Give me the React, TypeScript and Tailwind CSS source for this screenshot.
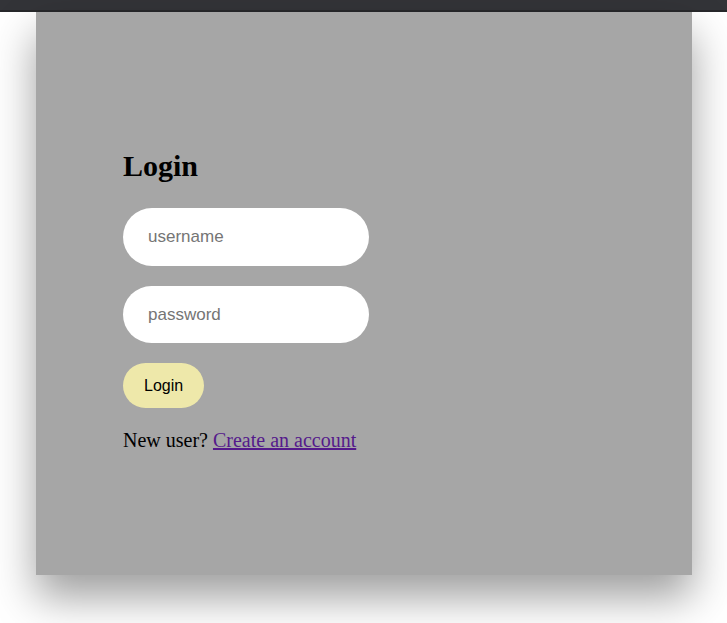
import React from 'react';

const App = () => {
  return (
    <div className="min-h-[623px] bg-white">
      <div className="h-[10px] bg-[#333438]" />
      <div className="h-[2px] bg-[#27282b]" />
      <div className="ml-[36px] flex h-[563px] w-[656px] flex-col items-start bg-[#a6a6a6] pl-[87px] pt-[136px] shadow-[0_22px_40px_rgba(0,0,0,0.38)]">
        <h2 className="text-[30px] font-bold leading-[36px] text-black [font-family:'Liberation_Serif',serif]">
          Login
        </h2>
        <input
          type="text"
          placeholder="username"
          className="mt-[24px] h-[58px] w-[246px] rounded-full bg-white px-[25px] text-[17px] outline-none placeholder:text-[#757575] [font-family:'Liberation_Sans',sans-serif]"
        />
        <input
          type="password"
          placeholder="password"
          className="mt-[20px] h-[57px] w-[246px] rounded-full bg-white px-[25px] text-[17px] outline-none placeholder:text-[#757575] [font-family:'Liberation_Sans',sans-serif]"
        />
        <button className="mt-[20px] h-[45px] rounded-full bg-[#eee8aa] px-[21px] text-[16px] text-black [font-family:'Liberation_Sans',sans-serif]">
          Login
        </button>
        <p className="mt-[20px] text-[20px] leading-[24px] text-black [font-family:'Liberation_Serif',serif]">
          New user?{' '}
          <a href="#" className="text-[#551a8b] underline">
            Create an account
          </a>
        </p>
      </div>
    </div>
  );
};

export default App;
